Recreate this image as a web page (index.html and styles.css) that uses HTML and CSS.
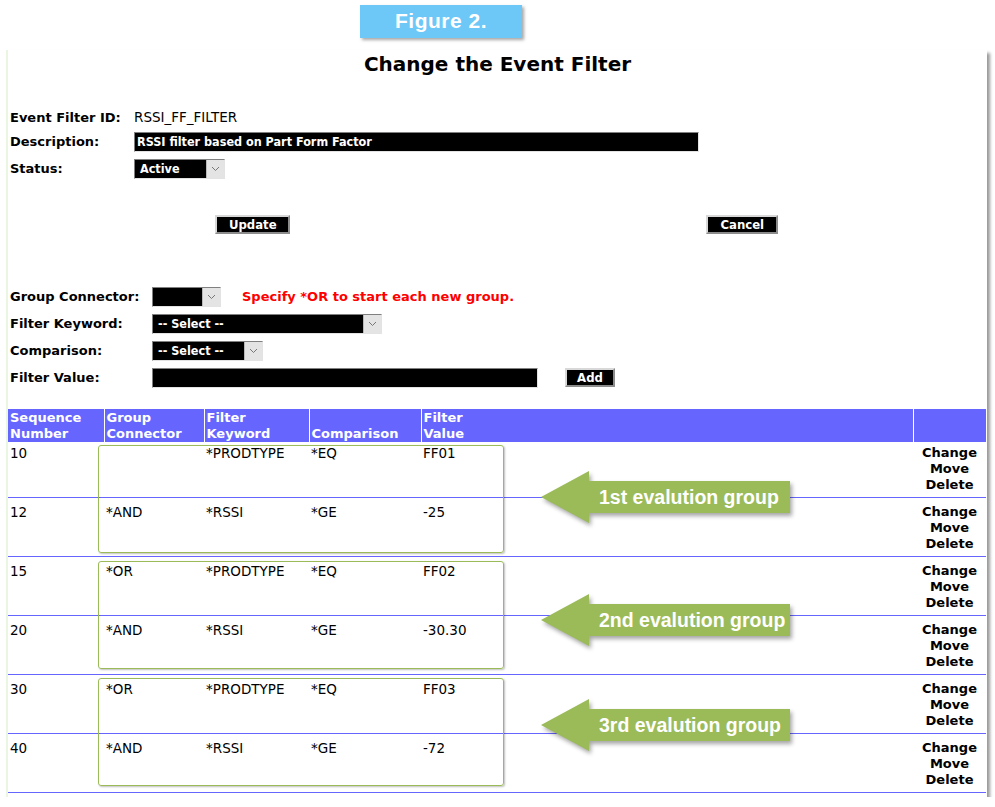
FILE: index.html
```html
<!DOCTYPE html>
<html lang="en">

<head>
    <meta charset="UTF-8">
    <title>Change the Event Filter</title>
    <link rel="stylesheet" href="styles.css">
</head>

<body>
    <div class="figure-tag">Figure 2.</div>

    <div class="panel">
        <h1 class="title">Change the Event Filter</h1>

        <div class="head-form">
            <div class="row row-id">
                <span class="label">Event Filter ID:</span>
                <span class="value">RSSI_FF_FILTER</span>
            </div>
            <div class="row">
                <span class="label">Description:</span>
                <span class="field field-desc">RSSI filter based on Part Form Factor</span>
            </div>
            <div class="row">
                <span class="label">Status:</span>
                <span class="select select-status"><span class="select-text">Active</span><span class="select-btn"><svg width="9" height="6" viewBox="0 0 9 6"><path d="M1 1 L4.5 4.5 L8 1" fill="none" stroke="#777" stroke-width="1"/></svg></span></span>
            </div>
        </div>

        <div class="buttons">
            <div class="half"><span class="btn btn-update">Update</span></div>
            <div class="half"><span class="btn btn-cancel">Cancel</span></div>
        </div>

        <div class="entry-form">
            <div class="row">
                <span class="label">Group Connector:</span>
                <span class="select select-conn"><span class="select-text"></span><span class="select-btn"><svg width="9" height="6" viewBox="0 0 9 6"><path d="M1 1 L4.5 4.5 L8 1" fill="none" stroke="#777" stroke-width="1"/></svg></span></span>
                <span class="hint">Specify *OR to start each new group.</span>
            </div>
            <div class="row">
                <span class="label">Filter Keyword:</span>
                <span class="select select-keyword"><span class="select-text">-- Select --</span><span class="select-btn"><svg width="9" height="6" viewBox="0 0 9 6"><path d="M1 1 L4.5 4.5 L8 1" fill="none" stroke="#777" stroke-width="1"/></svg></span></span>
            </div>
            <div class="row">
                <span class="label">Comparison:</span>
                <span class="select select-comp"><span class="select-text">-- Select --</span><span class="select-btn"><svg width="9" height="6" viewBox="0 0 9 6"><path d="M1 1 L4.5 4.5 L8 1" fill="none" stroke="#777" stroke-width="1"/></svg></span></span>
            </div>
            <div class="row">
                <span class="label">Filter Value:</span>
                <span class="field field-value"></span>
                <span class="btn btn-add">Add</span>
            </div>
        </div>

        <div class="list">
            <table class="filter-table">
                <thead>
                    <tr>
                        <th class="c-seq">Sequence<br>Number</th>
                        <th class="c-conn">Group<br>Connector</th>
                        <th class="c-key">Filter<br>Keyword</th>
                        <th class="c-comp">Comparison</th>
                        <th class="c-val">Filter<br>Value</th>
                        <th class="c-act"></th>
                    </tr>
                </thead>
                <tbody>
                    <tr class="first">
                        <td>10</td><td></td><td>*PRODTYPE</td><td>*EQ</td><td>FF01</td>
                        <td class="act">Change<br>Move<br>Delete</td>
                    </tr>
                    <tr>
                        <td>12</td><td>*AND</td><td>*RSSI</td><td>*GE</td><td>-25</td>
                        <td class="act">Change<br>Move<br>Delete</td>
                    </tr>
                    <tr>
                        <td>15</td><td>*OR</td><td>*PRODTYPE</td><td>*EQ</td><td>FF02</td>
                        <td class="act">Change<br>Move<br>Delete</td>
                    </tr>
                    <tr>
                        <td>20</td><td>*AND</td><td>*RSSI</td><td>*GE</td><td>-30.30</td>
                        <td class="act">Change<br>Move<br>Delete</td>
                    </tr>
                    <tr>
                        <td>30</td><td>*OR</td><td>*PRODTYPE</td><td>*EQ</td><td>FF03</td>
                        <td class="act">Change<br>Move<br>Delete</td>
                    </tr>
                    <tr>
                        <td>40</td><td>*AND</td><td>*RSSI</td><td>*GE</td><td>-72</td>
                        <td class="act">Change<br>Move<br>Delete</td>
                    </tr>
                </tbody>
            </table>

            <!-- annotation boxes round each evaluation group -->
            <div class="group-box group-1"></div>
            <div class="group-box group-2"></div>
            <div class="group-box group-3"></div>

            <div class="callout callout-1">
                <svg width="252" height="54" viewBox="0 0 252 54"><polygon points="1,26 49,0 49,10 250,10 250,42 49,42 49,52" fill="#9bbb59"/></svg>
                <span class="callout-text">1st evalution group</span>
            </div>
            <div class="callout callout-2">
                <svg width="252" height="54" viewBox="0 0 252 54"><polygon points="1,26 49,0 49,10 250,10 250,42 49,42 49,52" fill="#9bbb59"/></svg>
                <span class="callout-text">2nd evalution group</span>
            </div>
            <div class="callout callout-3">
                <svg width="252" height="54" viewBox="0 0 252 54"><polygon points="1,26 49,0 49,10 250,10 250,42 49,42 49,52" fill="#9bbb59"/></svg>
                <span class="callout-text">3rd evalution group</span>
            </div>
        </div>
    </div>
</body>

</html>
```

FILE: styles.css
```css
* {
    padding: 0;
    margin: 0;
}

body {
    background-color: #fff;
    font-family: "DejaVu Sans", Verdana, sans-serif;
    font-size: 13.5px;
    color: #000;
}

.figure-tag {
    width: 162px;
    height: 33px;
    margin: 5px 0 0 360px;
    background-color: #6dc7f7;
    box-shadow: 2px 2px 3px rgba(0, 0, 0, .35);
    color: #fff;
    font-family: "Liberation Sans", Arial, sans-serif;
    font-size: 21px;
    font-weight: bold;
    letter-spacing: .5px;
    line-height: 32px;
    text-align: center;
}

.panel {
    width: 979px;
    height: 747px;
    margin: 12px 0 0 6px;
    border-left: 2px solid #eaf5e2;
    box-shadow: 3px 3px 3px rgba(0, 0, 0, .4);
    background-color: #fff;
}

.title {
    height: 28px;
    padding-top: 1px;
    font-size: 20px;
    line-height: 26px;
    text-align: center;
}

/* top part of the form */
.head-form {
    padding: 27px 0 0 2px;
}

.row {
    display: flex;
    align-items: center;
    height: 27px;
}

.row-id {
    height: 22px;
}

.label {
    font-size: 13px;
    font-weight: bold;
}

.head-form .label {
    width: 124px;
}

.entry-form .label {
    width: 142px;
}

.field,
.select {
    display: flex;
    box-sizing: border-box;
    height: 20px;
    border: 1px solid;
    border-color: #808080 #e3e3e3 #e3e3e3 #808080;
    background-color: #000;
    color: #fff;
    font-family: "DejaVu Sans Condensed", Tahoma, sans-serif;
    font-weight: bold;
    font-size: 12.5px;
    line-height: 18px;
}

.field {
    padding-left: 2px;
}

.field-desc {
    width: 565px;
}

.field-value {
    width: 386px;
}

.select-text {
    flex: 1;
    padding-left: 5px;
}

.select-btn {
    display: flex;
    align-items: center;
    justify-content: center;
    width: 17px;
    border-left: 1px solid #b9b9b9;
    background-color: #e4e4e4;
}

.select-status {
    width: 91px;
}

.select-conn {
    width: 69px;
}

.select-keyword {
    width: 230px;
}

.select-comp {
    width: 111px;
}

.hint {
    margin-left: 21px;
    color: #f00;
    font-size: 13px;
    font-weight: bold;
}

.btn {
    display: inline-block;
    box-sizing: border-box;
    height: 19px;
    border: 2px solid;
    border-color: #d8d8d8 #8c8c8c #8c8c8c #d8d8d8;
    background-color: #000;
    color: #fff;
    font-family: "DejaVu Sans Condensed", Tahoma, sans-serif;
    font-weight: bold;
    font-size: 13px;
    line-height: 15px;
    text-align: center;
}

.btn-update {
    width: 75px;
}

.btn-cancel {
    width: 72px;
}

.btn-add {
    width: 50px;
    margin-left: 27px;
}

.buttons {
    display: flex;
    padding-top: 33px;
    height: 68px;
}

.half {
    flex: 1;
    text-align: center;
}

.entry-form {
    padding: 0 0 0 2px;
}

/* list of filter lines */
.list {
    position: relative;
    margin-top: 18px;
}

.filter-table {
    width: 978px;
    border-collapse: collapse;
    table-layout: fixed;
}

.filter-table th {
    box-sizing: border-box;
    height: 33px;
    padding: 0 2px;
    border-left: 1px solid #fff;
    background-color: #6666ff;
    color: #fff;
    font-size: 13px;
    line-height: 16px;
    text-align: left;
    vertical-align: bottom;
}

.filter-table th:first-child {
    border-left: none;
}

.c-seq {
    width: 96px;
}

.c-conn {
    width: 100px;
}

.c-key {
    width: 105px;
}

.c-comp {
    width: 112px;
}

.c-act {
    width: 73px;
}

.filter-table td {
    height: 59px;
    padding: 6px 2px 0;
    border-bottom: 1px solid #6666ff;
    line-height: 16px;
    vertical-align: top;
    box-sizing: border-box;
}

.filter-table tr.first td {
    height: 55px;
    padding-top: 3px;
}

.filter-table td.act {
    font-size: 13px;
    font-weight: bold;
    text-align: center;
}

.group-box {
    position: absolute;
    left: 90px;
    width: 404px;
    height: 106px;
    border: 1px solid #9bbb59;
    border-radius: 3px;
    box-shadow: 1px 1px 2px rgba(0, 0, 0, .25);
}

.group-1 {
    top: 36px;
}

.group-2 {
    top: 152px;
}

.group-3 {
    top: 269px;
}

.callout {
    position: absolute;
    left: 532px;
    width: 252px;
    height: 54px;
}

.callout svg {
    display: block;
    filter: drop-shadow(2px 3px 2px rgba(0, 0, 0, .35));
}

.callout-text {
    position: absolute;
    top: 10px;
    left: 59px;
    color: #fff;
    font-family: "Liberation Sans", Arial, sans-serif;
    font-size: 19.5px;
    font-weight: bold;
    line-height: 32px;
    white-space: nowrap;
}

.callout-1 {
    top: 62px;
}

.callout-2 {
    top: 185px;
}

.callout-3 {
    top: 290px;
}
```
